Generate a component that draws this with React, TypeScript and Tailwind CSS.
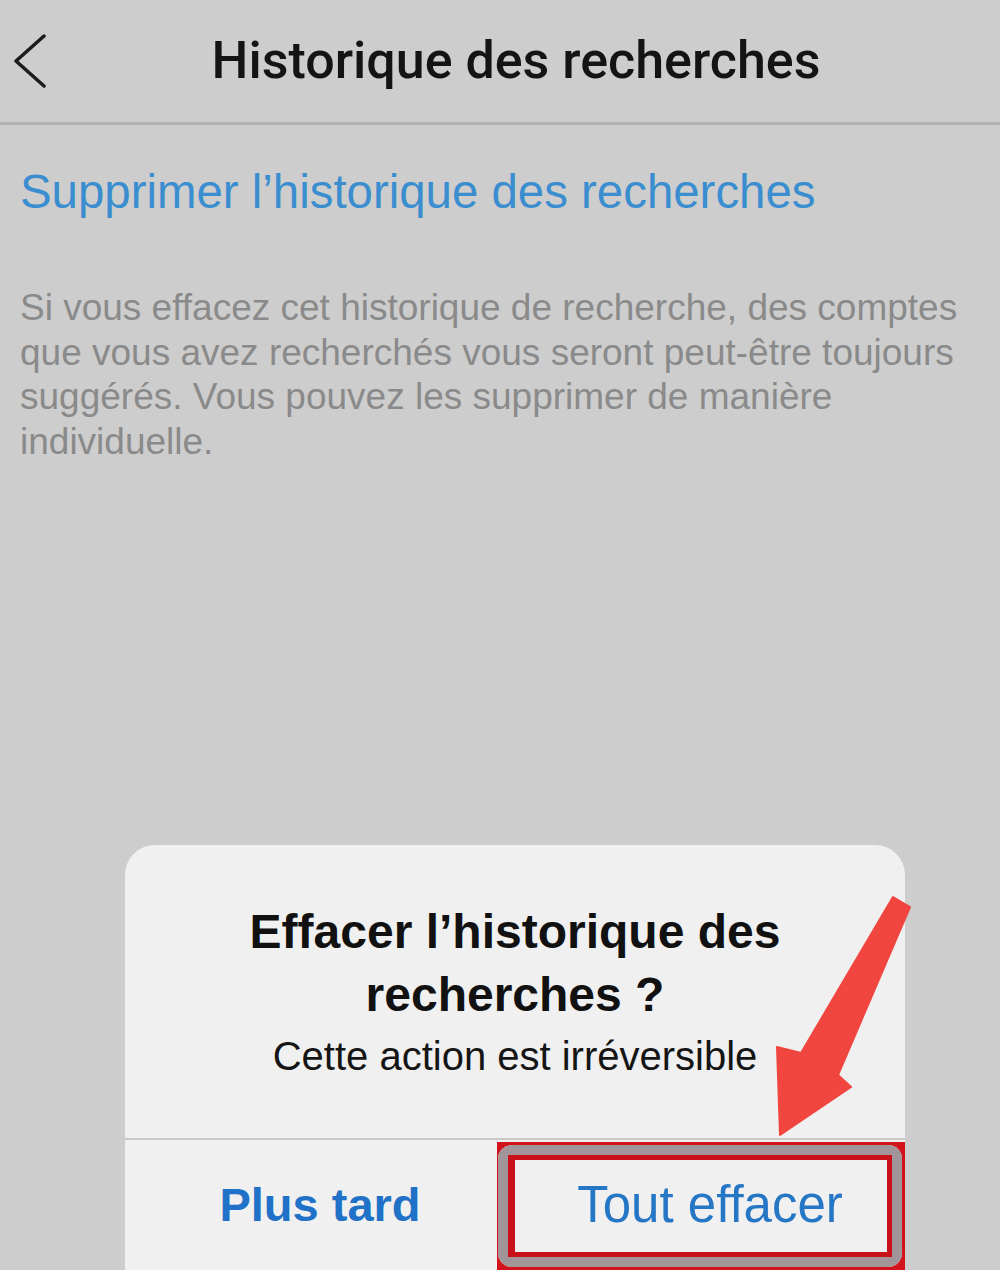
import React from "react";

export default function App() {
  return (
    <div
      className="relative w-[1000px] h-[1270px] overflow-hidden bg-[#cdcdcd]"
      style={{ fontFamily: '"Liberation Sans", Arial, sans-serif' }}
    >
      {/* Header */}
      <div className="flex h-[125px] items-center border-b-[3px] border-[#b3b3b3]">
        <svg
          className="ml-[12px] shrink-0"
          width="36"
          height="54"
          viewBox="0 0 36 54"
          fill="none"
        >
          <path
            d="M32 2 L4 27 L32 52"
            stroke="#1c1c1c"
            strokeWidth="3.5"
            strokeLinecap="round"
            strokeLinejoin="round"
          />
        </svg>
        <div
          className="flex-1 pr-[16px] text-center text-[52px] leading-[60px] font-medium text-[#141414]"
          style={{ fontFamily: 'Roboto, "Liberation Sans", sans-serif' }}
        >
          Historique des recherches
        </div>
      </div>

      {/* Link */}
      <div className="pl-[20px] pt-[39px] text-[47.4px] leading-[56px] text-[#3a8ed0]">
        Supprimer l’historique des recherches
      </div>

      {/* Paragraph */}
      <p className="mt-[66px] pl-[20px] text-[37px] leading-[44.5px] text-[#8a8a8a] whitespace-nowrap">
        Si vous effacez cet historique de recherche, des comptes
        <br />
        que vous avez recherchés vous seront peut-être toujours
        <br />
        suggérés. Vous pouvez les supprimer de manière
        <br />
        individuelle.
      </p>

      {/* Dialog */}
      <div className="absolute left-[125px] top-[845px] w-[780px] rounded-t-[30px] bg-[#f0f0f0] pt-[55px]">
        <div className="text-center text-[48px] leading-[63px] font-bold text-[#111111]">
          Effacer l’historique des
          <br />
          recherches ?
        </div>
        <div className="mt-[6px] text-center text-[40px] leading-[48px] text-[#151515]">
          Cette action est irréversible
        </div>
        <div className="mt-[58px] flex h-[132px] border-t-[2px] border-[#c9c9c9]">
          <div className="flex flex-1 items-center justify-center text-[47px] leading-[56px] font-bold text-[#1f72c7]">
            Plus tard
          </div>
          <div className="flex flex-1 items-center justify-center text-[51px] leading-[58px] text-[#2676c6]">
            Tout effacer
          </div>
        </div>
      </div>

      {/* Red highlight annotation */}
      <div className="pointer-events-none absolute left-[497px] top-[1142px] h-[128px] w-[408px] overflow-hidden pl-[1px] pr-[3px] pt-[3px] pb-[3px]">
        <div className="h-full rounded-[14px] border-[10px] border-[#a1959a] shadow-[0_0_0_16px_#d3121c]">
          <div className="h-full border-[5px] border-l-[7px] border-[#c9111b]" />
        </div>
      </div>

      {/* Red arrow annotation */}
      <svg
        className="pointer-events-none absolute left-[770px] top-[890px]"
        width="150"
        height="250"
        viewBox="0 0 150 250"
      >
        <polygon
          points="10,245 7,157 31,163 123,7 140,17 68,185 81,197"
          fill="#f0463f"
          stroke="#f0463f"
          strokeWidth="2"
          strokeLinejoin="round"
        />
      </svg>
    </div>
  );
}
